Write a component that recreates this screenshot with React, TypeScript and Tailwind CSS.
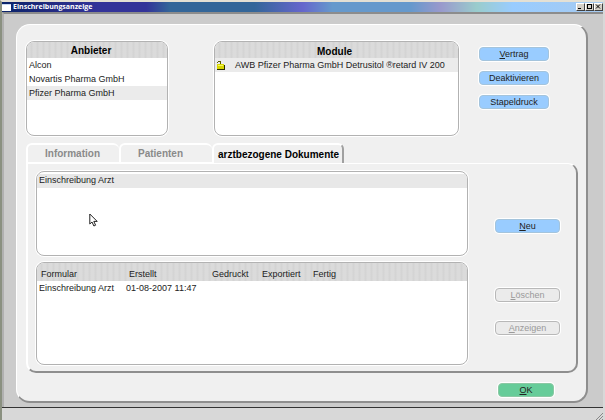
import React, { useState } from 'react';

const providers = ['Alcon', 'Novartis Pharma GmbH', 'Pfizer Pharma GmbH'];
const tabs = [
  { label: 'Information', className: 'w-[93px] pl-[17px]' },
  { label: 'Patienten', className: 'w-[93px] pl-[17px]' },
  { label: 'arztbezogene Dokumente', className: 'w-[132px] pl-1 border-r-2 border-r-[#a0a0a0]' },
];
const forms = [{ name: 'Einschreibung Arzt', created: '01-08-2007 11:47' }];

const listBox = 'overflow-hidden rounded-lg border border-[#b2b2b2] bg-white shadow-[0_0_0_1px_#fff]';
const stripes = 'bg-[repeating-linear-gradient(90deg,#dbdbdb_0px,#dbdbdb_3px,#d4d4d4_4px,#d4d4d4_5px,#dbdbdb_6px)]';

const LockIcon = () => (
  <svg width="9" height="10" viewBox="0 0 9 10" className="shrink-0" shapeRendering="crispEdges">
    <path d="M1.5 3V2M2 1.5h2.5M4.5 2v3" fill="none" stroke="#5a5a00" />
    <path d="M1 4h7v5H1z" fill="#d8d800" />
    <path d="M2 5h5v1H2z" fill="#f4f46a" />
    <path d="M1 9.5h7.5V4.5" fill="none" stroke="#2c2c00" />
  </svg>
);

const Cursor = () => (
  <svg width="9" height="14" viewBox="0 0 9 14" className="absolute left-[52px] top-[41px]">
    <path d="M.8 1v10l2.2-2 1.9 4 1.7-.8L4.8 8.4h3.4z" fill="#fff" stroke="#222" strokeWidth="1" />
  </svg>
);

const WindowButton: React.FC<{ label: string; children: React.ReactNode }> = ({ label, children }) => (
  <button aria-label={label} className="h-2 w-[9px] border border-t-white border-l-white border-r-[#404040] border-b-[#404040] bg-[#d4d0c8]">
    <svg width="7" height="6" viewBox="0 0 7 6" shapeRendering="crispEdges" fill="none" stroke="#000">{children}</svg>
  </button>
);

const ActionButton: React.FC<{ hotkey?: string; text: string; className: string; disabled?: boolean }> = ({ hotkey, text, className, disabled }) => (
  <button disabled={disabled} className={`h-[14px] rounded border text-center leading-3 shadow-[0_0_0_1px_#fff] ${className}`}>
    {hotkey && <span className="underline">{hotkey}</span>}{text}
  </button>
);

const blue = 'border-[#a4c4dc] bg-[#99ccff]';
const grey = 'border-[#b8b8b8] bg-[#ebebeb] text-[#9a9a9a]';

const App: React.FC = () => {
  const [provider, setProvider] = useState(2);
  const [tab, setTab] = useState(2);

  return (
    <div className="flex min-h-screen flex-col border-x-2 border-t-2 border-b border-l-[#8a9080] border-r-[#d8d8d8] border-t-[#e4e0d4] border-b-[#f4f4f4] bg-[#cbcbcb] font-['Liberation_Sans',Arial,sans-serif] text-[9px] leading-[13px] text-[#222]">
      <header className="flex h-[10px] items-center bg-[linear-gradient(90deg,#0a246a_0%,#222a80_8%,#333399_16%,#333399_24%,#336699_28%,#336699_42%,#6666cc_50%,#6699cc_55%,#6699cc_68%,#9999cc_73%,#99cccc_79%,#99ccff_85%,#a6caf0_100%)]">
        <span className="h-[7px] w-[9px] border-t border-[#c8d8f0] bg-white" />
        <h1 className="ml-[2px] flex-1 font-['Open_Sans',sans-serif] text-[7px] font-bold leading-[10px] text-white">Einschreibungsanzeige</h1>
        <div className="flex">
          <WindowButton label="Minimieren"><path d="M1 4.5h3" /></WindowButton>
          <WindowButton label="Maximieren"><path d="M1.5 .5h4v4h-4z" /></WindowButton>
          <WindowButton label="Schließen"><path d="M1 .5l4 4M5 .5l-4 4" shapeRendering="auto" /></WindowButton>
        </div>
      </header>

      <main className="flex flex-1 flex-col border-l-2 border-t-2 border-l-[#b0b0b0] border-t-[#8c8c8c] pb-1 pl-3 pr-[15px] pt-[10px]">
        <div className="flex flex-1 flex-col rounded-[14px] border-b-2 border-l border-r-2 border-t border-b-[#8e8e8e] border-l-white border-r-[#8e8e8e] border-t-white bg-[#f0f0f0] pb-1 pl-[9px] pr-2 pt-4">
          <div className="flex items-start">
            <section className={`h-[95px] w-[142px] ${listBox}`}>
              <h2 className={`h-4 pr-3 text-center text-[10px] font-bold leading-[17px] text-black ${stripes}`}>Anbieter</h2>
              <ul>
                {providers.map((p, i) => (
                  <li key={p}>
                    <button onClick={() => setProvider(i)} className={`block h-[14px] w-full pl-[2px] text-left ${i === provider ? 'bg-[#ebebeb]' : ''}`}>{p}</button>
                  </li>
                ))}
              </ul>
            </section>

            <section className={`ml-[46px] h-[95px] flex-1 ${listBox}`}>
              <h2 className={`h-4 pr-1 text-center text-[10px] font-bold leading-[20px] text-black ${stripes}`}>Module</h2>
              <ul>
                <li className="flex h-[14px] items-center whitespace-nowrap bg-[#ebebeb] pl-px">
                  <LockIcon />
                  <span className="ml-[10px]">AWB Pfizer Pharma GmbH Detrusitol ®retard IV 200</span>
                </li>
              </ul>
            </section>

            <div className="ml-5 mr-[29px] flex w-[70px] flex-col gap-[10px] pt-[6px]">
              <ActionButton hotkey="V" text="ertrag" className={blue} />
              <ActionButton text="Deaktivieren" className={blue} />
              <ActionButton text="Stapeldruck" className={blue} />
            </div>
          </div>

          <div role="tablist" className="mt-[7px] flex h-5 text-[10px] font-bold">
            {tabs.map((t, i) => (
              <button
                key={t.label}
                role="tab"
                aria-selected={i === tab}
                onClick={() => setTab(i)}
                className={`whitespace-nowrap rounded-t-md border-l-2 border-t-2 border-white text-left ${t.className} ${i === tab ? 'text-black' : 'border-b text-[#8a8a8a]'}`}
              >
                {t.label}
              </button>
            ))}
          </div>

          <div role="tabpanel" className="flex flex-1 rounded-b-[10px] rounded-tr-[10px] border-b-2 border-l-2 border-r-2 border-t border-b-[#8e8e8e] border-l-white border-r-[#8e8e8e] border-t-white pb-[6px] pl-2 pt-[7px]">
            <div className="flex flex-1 flex-col gap-[6px]">
              <div className={`relative h-[85px] pt-[2px] ${listBox}`}>
                <ul>
                  <li className="h-[14px] bg-[#e8e8e8] pl-[2px]">Einschreibung Arzt</li>
                </ul>
                <Cursor />
              </div>

              <div className={`min-h-[103px] flex-1 ${listBox}`}>
                <table className="w-full table-fixed text-left">
                  <thead>
                    <tr className={`h-[18px] align-bottom ${stripes}`}>
                      <th className="w-[88px] pl-1 font-normal">Formular</th>
                      <th className="w-[83px] pl-1 font-normal">Erstellt</th>
                      <th className="w-[50px] pl-1 font-normal">Gedruckt</th>
                      <th className="w-[51px] pl-1 font-normal">Exportiert</th>
                      <th className="pl-1 font-normal">Fertig</th>
                    </tr>
                  </thead>
                  <tbody>
                    {forms.map(f => (
                      <tr key={f.name} className="h-[14px] whitespace-nowrap">
                        <td className="pl-[2px]">{f.name}</td>
                        <td className="pl-px">{f.created}</td>
                        <td />
                        <td />
                        <td />
                      </tr>
                    ))}
                  </tbody>
                </table>
              </div>
            </div>

            <div className="ml-[27px] mr-4 flex w-[65px] flex-col pt-12">
              <ActionButton hotkey="N" text="eu" className={blue} />
              <div className="mt-[55px] flex flex-col gap-[19px]">
                <ActionButton hotkey="L" text="öschen" disabled className={grey} />
                <ActionButton hotkey="A" text="nzeigen" disabled className={grey} />
              </div>
            </div>
          </div>

          <div className="mr-6 mt-[10px] flex justify-end">
            <ActionButton hotkey="O" text="K" className="w-14 border-[#8cc8a4] bg-[#66cc99]" />
          </div>
        </div>
      </main>

      <footer className="flex h-[14px] items-end justify-end border-t border-[#333] bg-[#d8d8d8]">
        <svg width="8" height="8" viewBox="0 0 8 8" stroke="#888" strokeWidth="1">
          <path d="M0 8L8 0M3 8l5-5M6 8l2-2" />
        </svg>
      </footer>
    </div>
  );
};

export default App;
